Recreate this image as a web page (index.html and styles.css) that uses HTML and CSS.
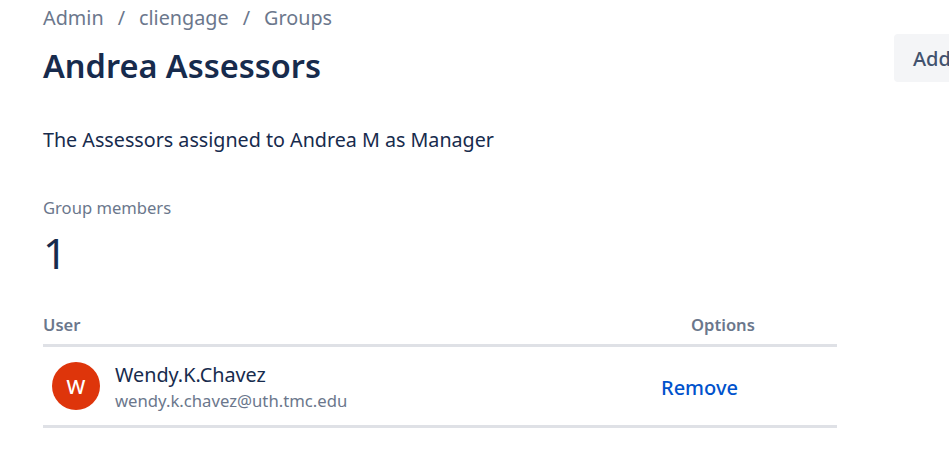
FILE: index.html
```html
<!doctype html>
<html lang="en">
<head>
    <meta charset="utf-8">
    <meta name="viewport" content="width=device-width, initial-scale=1.0">
    <title>Andrea Assessors - Groups</title>
    <link rel="stylesheet" href="styles.css">
</head>
<body>
    <div class="page">
        <div class="content">
            <div class="breadcrumbs">
                <a href="#">Admin</a>
                <span class="sep">/</span>
                <a href="#">cliengage</a>
                <span class="sep">/</span>
                <a href="#">Groups</a>
            </div>
            <h1 class="title">Andrea Assessors</h1>
            <p class="description">The Assessors assigned to Andrea M as Manager</p>
            <div class="stat">
                <div class="stat-label">Group members</div>
                <div class="stat-value">1</div>
            </div>
            <table class="members">
                <thead>
                    <tr>
                        <th class="col-user">User</th>
                        <th class="col-options">Options</th>
                    </tr>
                </thead>
                <tbody>
                    <tr>
                        <td>
                            <div class="user">
                                <span class="avatar">W</span>
                                <div class="user-info">
                                    <div class="user-name">Wendy.K.Chavez</div>
                                    <div class="user-email">wendy.k.chavez@uth.tmc.edu</div>
                                </div>
                            </div>
                        </td>
                        <td class="cell-options"><a class="remove" href="#">Remove</a></td>
                    </tr>
                </tbody>
            </table>
        </div>
        <button class="add-btn" type="button">Add</button>
    </div>
</body>
</html>
```

FILE: styles.css
```css
html, body {
    margin: 0;
    height: 100%;
    overflow: hidden;
    background: #fff;
}
body {
    font-family: "Noto Sans", "Open Sans", Arial, sans-serif;
    color: #172b4d;
}
.page {
    display: flex;
    align-items: flex-start;
    gap: 57px;
    width: 1100px;
    padding-left: 43px;
}
.content {
    width: 794px;
    flex-shrink: 0;
}
.breadcrumbs {
    display: flex;
    gap: 14px;
    height: 36px;
    font-size: 19.8px;
    line-height: 36px;
    color: #6b778c;
}
.breadcrumbs a {
    color: #6b778c;
    text-decoration: none;
}
.title {
    margin: 0;
    font-size: 32.5px;
    line-height: 60px;
    font-weight: 600;
    color: #172b4d;
}
.description {
    margin: 28px 0 0;
    font-size: 19.7px;
    line-height: 32px;
}
.stat {
    margin-top: 40px;
}
.stat-label {
    font-size: 16.6px;
    line-height: 24px;
    color: #6b778c;
}
.stat-value {
    margin-top: 4px;
    font-size: 42px;
    line-height: 58px;
    color: #172b4d;
}
.members {
    width: 100%;
    margin-top: 31px;
    border-collapse: collapse;
}
.members th {
    padding: 0 0 7px;
    font-size: 16.6px;
    line-height: 24px;
    font-weight: 600;
    color: #6b778c;
    text-align: left;
    border-bottom: 3px solid #dfe1e6;
}
.members td {
    padding: 0;
    height: 78px;
    border-bottom: 3px solid #dfe1e6;
}
.members .col-options {
    width: 176px;
    padding-left: 30px;
    box-sizing: border-box;
}
.members .cell-options {
    padding-top: 2px;
    box-sizing: border-box;
}
.user {
    display: flex;
    align-items: center;
    gap: 15px;
    padding-left: 9px;
}
.avatar {
    display: flex;
    align-items: center;
    justify-content: center;
    width: 48px;
    height: 48px;
    border-radius: 50%;
    background: #de350b;
    color: #fff;
    font-size: 20px;
    font-weight: 500;
}
.user-info {
    padding-top: 2px;
}
.user-name {
    font-size: 19.8px;
    line-height: 27px;
    color: #172b4d;
}
.user-email {
    margin-top: 1px;
    font-size: 16.7px;
    line-height: 24px;
    color: #6b778c;
}
.remove {
    font-size: 20px;
    font-weight: 500;
    color: #0052cc;
    text-decoration: none;
}
.add-btn {
    flex-shrink: 0;
    margin-top: 34px;
    height: 48px;
    padding: 0 19px;
    border: 0;
    border-radius: 4px;
    background: #f4f5f7;
    color: #42526e;
    font-family: inherit;
    font-size: 20px;
    font-weight: 500;
}
```
